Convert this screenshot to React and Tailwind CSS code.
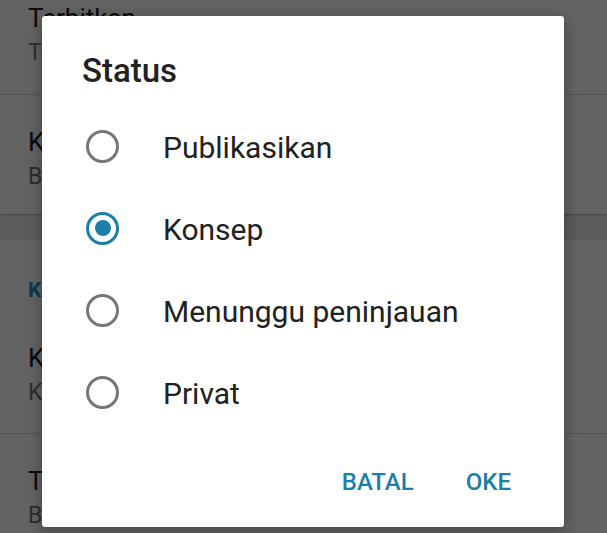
import React, { useState } from 'react';

const options = ['Publikasikan', 'Konsep', 'Menunggu peninjauan', 'Privat'];

const SettingRow = ({ title, sub, height = 'h-[119px]' }) => (
    <div className={`${height} pl-[28px] pt-[31px]`}>
        <div className="text-[26px] leading-[32px] text-[#212121]">{title}</div>
        <div className="mt-[5px] text-[23px] leading-[28px] text-[#757575]">{sub}</div>
    </div>
);

const Radio = ({ checked }) => (
    <div
        className={`flex h-[33px] w-[33px] shrink-0 items-center justify-center rounded-full border-[3px] ${
            checked ? 'border-[#1b7fa7]' : 'border-[#767676]'
        }`}
    >
        {checked && <div className="h-[16px] w-[16px] rounded-full bg-[#1b7fa7]" />}
    </div>
);

export default function App() {
    const [selected, setSelected] = useState('Konsep');

    return (
        <div className="relative h-[533px] w-[607px] overflow-hidden bg-[#eeeeee] font-['Roboto',sans-serif]">
            {/* halaman pengaturan di belakang dialog */}
            <div className="-mt-[29px] flex flex-col">
                <div className="bg-white shadow-[0_1px_2px_rgba(0,0,0,0.25)]">
                    <SettingRow title="Terbitkan" sub="Terbitkan segera" height="h-[123px]" />
                    <div className="h-px bg-[#dcdcdc]" />
                    <SettingRow title="Kategori" sub="Belum dikategorikan" />
                </div>
                <div className="mt-[26px] bg-white shadow-[0_1px_2px_rgba(0,0,0,0.25)]">
                    <div className="h-[71px] pl-[28px] pt-[38px]">
                        <div className="text-[21px] font-bold leading-[24px] text-[#2391c0]">Komentar</div>
                    </div>
                    <SettingRow title="Komentar" sub="Komentar diizinkan" height="h-[122px]" />
                    <div className="h-px bg-[#dcdcdc]" />
                    <SettingRow title="Tanda" sub="Belum ada tanda" />
                </div>
            </div>

            <div className="absolute inset-0 bg-black/[0.61]" />

            {/* dialog status */}
            <div className="absolute left-[42px] top-[16px] flex h-[511px] w-[522px] flex-col rounded-[3px] bg-white pt-[37px] shadow-[0_4px_16px_rgba(0,0,0,0.35)]">
                <h2 className="pl-[40px] text-[33px] font-medium leading-[36px] text-[#212121]">Status</h2>
                <div className="mt-[16px] flex flex-col">
                    {options.map((opt) => (
                        <div
                            key={opt}
                            onClick={() => setSelected(opt)}
                            className="flex h-[82px] cursor-pointer items-center pl-[44px]"
                        >
                            <Radio checked={selected === opt} />
                            <span className="ml-[44px] pt-1 text-[30px] leading-[36px] text-[#212121]">{opt}</span>
                        </div>
                    ))}
                </div>
                <div className="mt-[35px] flex justify-end gap-[52px] pr-[53px]">
                    <button className="text-[24px] font-medium leading-[28px] text-[#1b7fa7]">BATAL</button>
                    <button className="text-[24px] font-medium leading-[28px] text-[#1b7fa7]">OKE</button>
                </div>
            </div>
        </div>
    );
}
